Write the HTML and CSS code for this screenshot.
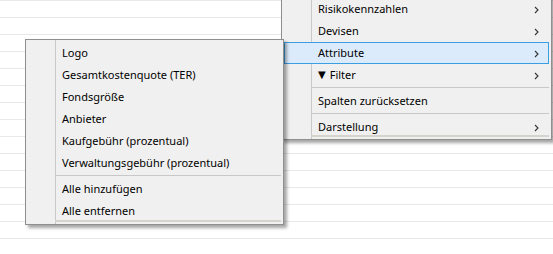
FILE: index.html
```html
<!DOCTYPE html>
<html lang="de">
<head>
    <meta charset="UTF-8">
    <title>Spalten</title>
    <link rel="stylesheet" href="styles.css">
</head>
<body>
    <!-- Tabelle im Hintergrund -->
    <div class="grid">
        <div class="row"></div><div class="row"></div><div class="row"></div>
        <div class="row"></div><div class="row"></div><div class="row"></div>
        <div class="row"></div><div class="row"></div><div class="row"></div>
        <div class="row"></div><div class="row"></div><div class="row"></div>
        <div class="row"></div><div class="row"></div><div class="row"></div>
    </div>

    <!-- Hauptmenü -->
    <ul class="menu main-menu">
        <li class="item">Risikokennzahlen<svg class="arrow" width="5" height="8" viewBox="0 0 5 8"><path d="M1 1 L4 4 L1 7" fill="none" stroke="#333" stroke-width="1.1"/></svg></li>
        <li class="item">Devisen<svg class="arrow" width="5" height="8" viewBox="0 0 5 8"><path d="M1 1 L4 4 L1 7" fill="none" stroke="#333" stroke-width="1.1"/></svg></li>
        <li class="item active">Attribute<svg class="arrow" width="5" height="8" viewBox="0 0 5 8"><path d="M1 1 L4 4 L1 7" fill="none" stroke="#333" stroke-width="1.1"/></svg></li>
        <li class="item"><span class="tri">▼</span>Filter<svg class="arrow" width="5" height="8" viewBox="0 0 5 8"><path d="M1 1 L4 4 L1 7" fill="none" stroke="#333" stroke-width="1.1"/></svg></li>
        <li class="sep"></li>
        <li class="item">Spalten zurücksetzen</li>
        <li class="sep"></li>
        <li class="item">Darstellung<svg class="arrow" width="5" height="8" viewBox="0 0 5 8"><path d="M1 1 L4 4 L1 7" fill="none" stroke="#333" stroke-width="1.1"/></svg></li>
    </ul>

    <!-- Untermenü Attribute -->
    <ul class="menu sub-menu">
        <li class="item">Logo</li>
        <li class="item">Gesamtkostenquote (TER)</li>
        <li class="item">Fondsgröße</li>
        <li class="item">Anbieter</li>
        <li class="item">Kaufgebühr (prozentual)</li>
        <li class="item">Verwaltungsgebühr (prozentual)</li>
        <li class="sep"></li>
        <li class="item">Alle hinzufügen</li>
        <li class="item">Alle entfernen</li>
    </ul>
</body>
</html>
```

FILE: styles.css
```css
/* Grundeinstellungen */
* {
    margin: 0;
    padding: 0;
    box-sizing: border-box;
}

body {
    font-family: "Noto Sans", "DejaVu Sans", sans-serif;
    font-size: 11px;
    color: #000;
    background: #fff;
    width: 553px;
    height: 254px;
    overflow: hidden;
    position: relative;
}

/* Zeilen der Tabelle */
.row {
    height: 17px;
    border-top: 1px solid #e8e8e8;
}

/* Menüs */
.menu {
    list-style: none;
    position: absolute;
    background:
        linear-gradient(to right, transparent 29px, #c8c8c8 29px, #c8c8c8 30px, transparent 30px),
        #f0f0f0;
    border: 1px solid #8f8f8f;
    padding: 2px;
    box-shadow: 3px 3px 3px rgba(0, 0, 0, 0.35);
}

.menu::after {
    content: "";
    position: absolute;
    left: 29px;
    right: 2px;
    bottom: 2px;
    height: 2px;
    background: #d6d3ce;
}

.main-menu {
    top: -5px;
    left: 281px;
    width: 271px;
    padding-bottom: 1px;
}

.sub-menu {
    top: 39px;
    left: 25px;
    width: 259px;
}

.item {
    height: 22px;
    line-height: 22px;
    padding-left: 33px;
    position: relative;
    white-space: nowrap;
    border: 1px solid transparent;
    display: flex;
    align-items: center;
}

.item.active {
    background: #dcebfc;
    border-color: #3a9ee0;
}

.arrow {
    position: absolute;
    right: 9px;
    top: 7px;
}

.tri {
    font-family: "DejaVu Sans", sans-serif;
    font-size: 10px;
    margin-right: 4px;
}

/* Trennlinien */
.sep {
    height: 4px;
    margin-left: 27px;
    padding-top: 1px;
}

.sep::before {
    content: "";
    display: block;
    height: 1px;
    background: #c8c8c8;
}
```
